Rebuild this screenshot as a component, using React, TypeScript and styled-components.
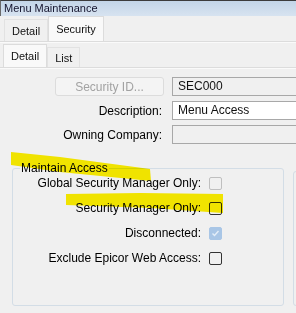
import { Fragment } from "react";
import styled, { createGlobalStyle } from "styled-components";

const GlobalStyle = createGlobalStyle`
  html, body {
    margin: 0;
    padding: 0;
    background: #f0f0f0;
    overflow: hidden;
  }
  body {
    font-family: "Liberation Sans", Arial, sans-serif;
    color: #000;
  }
`;

const Page = styled.div`
  position: relative;
  width: 296px;
  height: 313px;
  overflow: hidden;
  background: #f0f0f0;
`;

const TitleBar = styled.div`
  height: 15px;
  border-top: 1px solid #3c3c3c;
  border-left: 1px solid #6a6a6a;
  background: linear-gradient(#c3d5e8, #d7e3f0);
  font-size: 11px;
  line-height: 15px;
  padding-left: 3px;
  color: #14142e;
`;

const TabStrip = styled.div<{ $height: number; $indent: number }>`
  display: flex;
  align-items: flex-end;
  height: ${(p) => p.$height}px;
  padding-left: ${(p) => p.$indent}px;
  border-bottom: 1px solid #dcdcdc;
  box-shadow: 0 1px 0 #fafafa;
`;

const Tab = styled.div<{ $active?: boolean; $h: number }>`
  box-sizing: border-box;
  height: ${(p) => p.$h}px;
  padding: 0 7px;
  display: flex;
  align-items: center;
  font-size: 11px;
  background: ${(p) => (p.$active ? "#f9f9f9" : "#f0f0f0")};
  border: 1px solid ${(p) => (p.$active ? "#dcdcdc" : "#e2e2e2")};
  border-bottom: none;
  color: #111;
`;

const Form = styled.div`
  display: grid;
  grid-template-columns: 164px 140px;
  grid-auto-rows: 19px;
  column-gap: 8px;
  row-gap: 5px;
  margin-top: 9px;
  align-items: center;
`;

const Label = styled.div`
  font-size: 12px;
  text-align: right;
  padding-right: 2px;
  white-space: nowrap;
`;

const LookupButton = styled.div`
  justify-self: end;
  box-sizing: border-box;
  width: 109px;
  height: 19px;
  border: 1px solid #dcdcdc;
  border-radius: 3px;
  background: #f4f4f4;
  color: #a2a2a2;
  font-size: 12px;
  display: flex;
  align-items: center;
  justify-content: center;
`;

const TextBox = styled.div<{ $readOnly?: boolean }>`
  box-sizing: border-box;
  height: 19px;
  border: 1px solid #a8a8a8;
  border-right: none;
  background: ${(p) => (p.$readOnly ? "#f0f0f0" : "#ffffff")};
  font-size: 12px;
  line-height: 17px;
  padding-left: 5px;
  color: #111;
`;

const GroupRow = styled.div`
  display: flex;
  align-items: flex-start;
  gap: 9px;
  padding-left: 12px;
  margin-top: 17px;
`;

const Group = styled.fieldset`
  box-sizing: border-box;
  flex: 0 0 272px;
  margin: 0;
  width: 272px;
  height: 145px;
  padding: 0;
  border: 1px solid #d3dde6;
  border-radius: 3px;
  min-width: 0;
`;

const Legend = styled.legend`
  font-size: 12px;
  line-height: 14px;
  padding: 0 1px;
  margin-left: 7px;
`;

const SideGroup = styled.div`
  box-sizing: border-box;
  flex: 0 0 100px;
  margin-top: 10px;
  height: 135px;
  border: 1px solid #d3dde6;
  border-radius: 3px;
`;

const CheckGrid = styled.div`
  display: grid;
  grid-template-columns: 188px 13px;
  column-gap: 8px;
  grid-template-rows: 13px 13px 13px 13px;
  row-gap: 12px;
  margin-top: 2px;
  align-items: center;
`;

const CheckLabel = styled.div`
  font-size: 12px;
  text-align: right;
  white-space: nowrap;
  line-height: 13px;
`;

const Box = styled.span<{ $checked?: boolean; $disabled?: boolean }>`
  box-sizing: border-box;
  width: 13px;
  height: 13px;
  border-radius: 2px;
  display: flex;
  align-items: center;
  justify-content: center;
  border: 1px solid
    ${(p) => (p.$checked ? "#a9c6e6" : p.$disabled ? "#bfbfbf" : "#333333")};
  background: ${(p) => (p.$checked ? "#a9c6e6" : "#f0f0f0")};
`;

const Highlight = styled.svg`
  position: absolute;
  left: 0;
  top: 0;
  pointer-events: none;
  mix-blend-mode: multiply;
`;

function CheckBox({ checked, disabled }: { checked?: boolean; disabled?: boolean }) {
  return (
    <Box $checked={checked} $disabled={disabled}>
      {checked && (
        <svg width="9" height="9" viewBox="0 0 9 9">
          <path d="M1.5 4.5 L3.5 6.5 L7.5 2" fill="none" stroke="#e4eef8" strokeWidth="1.4" />
        </svg>
      )}
    </Box>
  );
}

const checks = [
  { label: "Global Security Manager Only:", disabled: true },
  { label: "Security Manager Only:" },
  { label: "Disconnected:", disabled: true, checked: true },
  { label: "Exclude Epicor Web Access:" },
];

export default function App() {
  return (
    <Page>
      <GlobalStyle />
      <TitleBar>Menu Maintenance</TitleBar>
      <TabStrip $height={25} $indent={4}>
        <Tab $h={22}>Detail</Tab>
        <Tab $h={25} $active>Security</Tab>
      </TabStrip>
      <TabStrip $height={25} $indent={3}>
        <Tab $h={23} $active>Detail</Tab>
        <Tab $h={20}>List</Tab>
      </TabStrip>

      <Form>
        <LookupButton>Security ID...</LookupButton>
        <TextBox $readOnly>SEC000</TextBox>
        <Label>Description:</Label>
        <TextBox>Menu Access</TextBox>
        <Label>Owning Company:</Label>
        <TextBox $readOnly />
      </Form>

      <GroupRow>
        <Group>
          <Legend>Maintain Access</Legend>
          <CheckGrid>
            {checks.map((c) => (
              <Fragment key={c.label}>
                <CheckLabel>{c.label}</CheckLabel>
                <CheckBox checked={c.checked} disabled={c.disabled} />
              </Fragment>
            ))}
          </CheckGrid>
        </Group>
        <SideGroup />
      </GroupRow>

      <Highlight width="296" height="313">
        <polygon points="11,152 60,157 150,169 151,181 60,172 11,165" fill="#fff200" />
        <polygon points="66,194 140,193 223,194 223,213 150,208 66,205" fill="#fff200" />
      </Highlight>
    </Page>
  );
}
